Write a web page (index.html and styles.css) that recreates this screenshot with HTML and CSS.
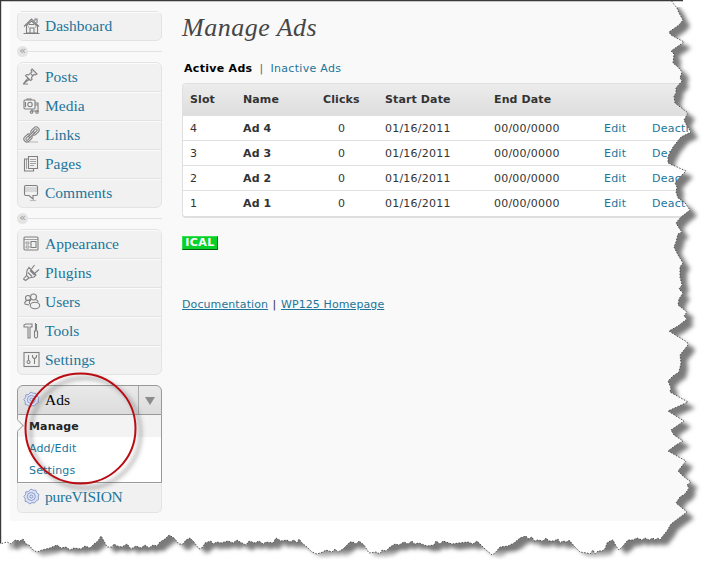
FILE: index.html
```html
<!DOCTYPE html>
<html lang="en">
<head>
<meta charset="utf-8">
<title>Manage Ads</title>
<link rel="stylesheet" href="styles.css">
</head>
<body>
<div class="page">
<div class="workspace">
  <nav class="sidebar">
    <ul class="menu">
      <li><svg class="icon" viewBox="0 0 18 18"><path d="M1 9.500 8.500 2l7.500 7.500M3.500 8v8h11V8M12 4V2h2v4M7 16v-5h4v5M6 7.500h5M0.500 16.500h16M5 10h1M12 10h1"/><path d="M3 9l5.500-5L14 9"/></svg><a>Dashboard</a></li>
    </ul>
    <div class="separator"><i>«</i></div>
    <ul class="menu">
      <li><svg class="icon" viewBox="0 0 18 18"><path d="M9 1l5 5-1.500 1-1.500-.5-2.500 3 .5 2-1.500 1L2.500 7.500 4 6.500l1.500.5L9 4 8 2.500zM5 10l-4.500 5.500L6 11.500M8 6l2 2M0 16h5"/></svg><a>Posts</a></li>
      <li><svg class="icon" viewBox="0 0 18 18"><rect x="1" y="3" width="11" height="9" rx="1"/><circle cx="7" cy="7.500" r="2.200"/><path d="M2.500 5v5M4 3V2h4v1M12 6h3v9M9 12v3M9 14h6M12 8h3"/><circle cx="8.500" cy="15" r="1.300"/><circle cx="14" cy="15" r="1.300"/></svg><a>Media</a></li>
      <li><svg class="icon" viewBox="0 0 18 18"><path class="faint" d="M5 16h10"/><g transform="rotate(-45 8.500 8.500)"><rect x="-1" y="5.500" width="9" height="6" rx="3"/><rect x="1" y="7.300" width="5" height="2.400" rx="1.200"/><rect x="9" y="5.500" width="9" height="6" rx="3"/><rect x="11" y="7.300" width="5" height="2.400" rx="1.200"/><path d="M5 7.700h7v1.800H5z" class="pale"/></g></svg><a>Links</a></li>
      <li><svg class="icon" viewBox="0 0 18 18"><path d="M5 4H1.500v12h9v-2"/><path class="pale" d="M5.500 1.500h9v12h-9z"/><path class="thin" d="M7 4.500h6M7 6.500h6M7 8.500h6M7 10.500h4M3.500 4v10"/></svg><a>Pages</a></li>
      <li><svg class="icon" viewBox="0 0 18 18"><rect class="shade" x="2" y="3" width="12" height="5"/><path d="M3 1.500h10q1.500 0 1.500 1.500v7q0 1.500-1.500 1.500h-3V15l-4-3.500H3Q1.500 11.500 1.500 10V3Q1.500 1.500 3 1.500z"/><path class="faint" d="M7 16.500h6"/></svg><a>Comments</a></li>
    </ul>
    <div class="separator"><i>«</i></div>
    <ul class="menu">
      <li><svg class="icon" viewBox="0 0 18 18"><rect x="1" y="2" width="14" height="13" rx="1"/><path class="thin" d="M1 4.500h14M3 7h3v2H3zM3 11h3v2H3z"/><path d="M8 6.500h5v6H8z"/></svg><a>Appearance</a></li>
      <li><svg class="icon" viewBox="0 0 18 18"><path d="M6 3.500 13 11l-2 2-5 1-2.500-2.500.5-5zM8.500 5l3-4M12 9l4-3.500M3.500 11.500.5 15l2 1.500L6 14M7 6.500l4.500 4.500M5 8.500l4 4"/></svg><a>Plugins</a></li>
      <li><svg class="icon" viewBox="0 0 18 18"><circle cx="5" cy="5" r="2.500"/><circle cx="10.500" cy="4" r="3"/><path d="M7 7C3 7 1 9 2 11l4 1M8 7c-2 1-2 3-1 4"/><ellipse class="pale" cx="12" cy="12.500" rx="4.700" ry="3.300"/><path d="M13 7c2 0 2 1 2 2"/></svg><a>Users</a></li>
      <li><svg class="icon" viewBox="0 0 18 18"><path d="M1 5V3l2-1h6v3H7v11H5V5H3zM12.500 1v8M11.500 9h3v6q-1.500 2-3 0zM13.500 2v6"/></svg><a>Tools</a></li>
      <li><svg class="icon" viewBox="0 0 18 18"><rect x="1" y="1.500" width="15" height="14"/><path d="M5.500 4v5M4 11a1.500 1.500 0 1 1 3 0 1.500 1.500 0 1 1-3 0M11.500 8v5M9.500 4v2l2 2 2-2V4"/></svg><a>Settings</a></li>
    </ul>
    <ul class="menu ads">
      <li class="current"><svg class="icon gear" viewBox="0 0 18 18"><path d="M8 1l2.200 1.300 2.600-.1.800 2.500L16 6.500l-.8 2.500.3 2.600-2.300 1.200L11.500 15 9 14.600 6.500 16l-1.900-2-2.500-.6.200-2.600L.8 8.500l1.700-2 .3-2.600 2.600-.4z"/><circle cx="8.300" cy="8.500" r="4"/><circle cx="8.300" cy="8.500" r="1.500"/></svg><a>Ads</a><span class="toggle"></span></li>
      <li class="submenu"><a class="selected">Manage</a><a>Add/Edit</a><a>Settings</a></li>
      <li><svg class="icon gear" viewBox="0 0 18 18"><path d="M8 1l2.200 1.300 2.600-.1.800 2.500L16 6.500l-.8 2.500.3 2.600-2.300 1.200L11.500 15 9 14.600 6.500 16l-1.900-2-2.500-.6.200-2.600L.8 8.500l1.700-2 .3-2.600 2.600-.4z"/><circle cx="8.300" cy="8.500" r="4"/><circle cx="8.300" cy="8.500" r="1.500"/></svg><a class="vision">pureVISION</a></li>
    </ul>
  </nav>
  <main>
    <h1>Manage Ads</h1>
    <div class="tabs"><b>Active Ads</b><span>|</span><a>Inactive Ads</a></div>
    <div class="ads-table">
      <div class="row head"><span>Slot</span><span>Name</span><span>Clicks</span><span>Start Date</span><span>End Date</span></div>
      <div class="row"><span>4</span><b>Ad 4</b><span class="clicks">0</span><span>01/16/2011</span><span>00/00/0000</span><a>Edit</a><a>Deacti</a></div>
      <div class="row"><span>3</span><b>Ad 3</b><span class="clicks">0</span><span>01/16/2011</span><span>00/00/0000</span><a>Edit</a><a>Deact</a></div>
      <div class="row"><span>2</span><b>Ad 2</b><span class="clicks">0</span><span>01/16/2011</span><span>00/00/0000</span><a>Edit</a><a>Deact</a></div>
      <div class="row"><span>1</span><b>Ad 1</b><span class="clicks">0</span><span>01/16/2011</span><span>00/00/0000</span><a>Edit</a><a>Deact</a></div>
    </div>
    <div class="ical">ICAL</div>
    <div class="links"><a>Documentation</a><span>|</span><a>WP125 Homepage</a></div>
  </main>
</div>
<svg class="overlay" width="704" height="565" viewBox="0 0 704 565">
  <defs>
    <path id="sheet" d="M0 0H671L673 3 677 8 679 13 683 20 679 25 669 32 671 35 684 42 671 51 674 54 673 63 678 67 682 72 680 78 682 81 676 88 676 93 674 96 675 103 688 113 684 120 687 126 691 132 681 137 673 147 668 157 668 163 686 171 680 177 675 183 677 187 676 192 678 198 685 203 690 210 681 217 676 223 679 228 682 232 678 234 676 242 674 247 678 255 683 263 680 267 680 277 682 285 679 289 683 293 679 299 678 305 687 312 684 316 687 319 678 326 669 331 677 336 687 342 688 345 680 355 681 363 679 372 673 376 668 381 671 388 670 392 688 402 668 411 684 421 671 430 674 435 683 441 676 445 668 451 686 461 678 471 683 476 691 482 687 485 689 488 685 494 680 497 676 503 687 512 671 524 667 531 662 537 660 540 658 538 655 540 653 538 649 540 645 538 642 540 637 538 633 540 628 540 623 546 619 550 616 546 613 540 610 541 607 543 605 549 602 551 598 551 595 554 593 550 590 554 587 553 580 552 575 547 569 540 567 542 563 541 560 543 558 539 554 541 549 541 546 538 543 541 538 540 534 541 532 537 528 539 526 536 520 538 514 543 508 546 500 547 495 553 492 555 485 549 477 541 473 544 468 542 459 543 452 544 443 541 440 544 436 541 434 545 427 546 419 543 414 544 412 541 408 544 404 542 399 545 395 544 390 547 386 551 382 550 380 554 376 552 369 553 364 545 359 541 356 544 353 542 350 542 346 546 343 549 338 552 335 549 332 552 326 550 323 552 317 554 312 552 307 547 302 543 299 539 297 543 294 540 290 542 287 540 281 541 276 538 273 543 266 542 263 544 259 541 255 543 249 541 246 545 240 542 237 540 233 543 228 541 221 543 217 542 213 544 211 541 205 543 203 547 199 549 194 542 190 538 186 540 183 544 179 544 174 538 169 535 165 539 160 542 157 546 153 545 149 548 145 545 141 548 136 546 131 549 127 544 122 547 117 546 114 544 112 547 107 547 104 541 101 536 98 541 94 544 90 548 85 546 81 549 74 548 70 550 66 547 61 548 57 545 50 548 42 550 37 552 33 550 29 545 26 544 23 539 20 541 15 540 11 544 7 542 0 544Z"/>
    <filter id="soft" x="-20%" y="-20%" width="140%" height="140%"><feGaussianBlur stdDeviation="2"/></filter>
    <mask id="cutout"><rect width="704" height="565" fill="#fff"/><use href="#sheet" fill="#000"/></mask>
    <linearGradient id="fade" gradientUnits="userSpaceOnUse" x1="0" y1="549" x2="0" y2="560"><stop offset="0" stop-color="#fff"/><stop offset="1" stop-color="#000"/></linearGradient>
    <linearGradient id="start" gradientUnits="userSpaceOnUse" x1="6" y1="0" x2="16" y2="0"><stop offset="0" stop-color="#fff"/><stop offset="1" stop-color="#fff" stop-opacity="0"/></linearGradient>
    <mask id="shade"><rect width="704" height="565" fill="url(#fade)"/></mask>
  </defs>
  <g mask="url(#cutout)">
    <rect width="704" height="565" fill="#fff"/>
    <g mask="url(#shade)"><use href="#sheet" transform="translate(7 6)" fill="#7a7a7a" filter="url(#soft)"/></g>
    <path d="M0 530H18V565H0Z" fill="url(#start)"/>
    <path d="M672 0H704V7H672Z" fill="#fff"/>
  </g>
  <use href="#sheet" fill="none" stroke="#444" stroke-width=".9" stroke-dasharray="1.500 1.500"/>
  <path d="M0 .5H683M.5 0V543" stroke="#3b383b" stroke-width="1.400"/>
  <circle cx="85.500" cy="433" r="55" fill="none" stroke="#555" stroke-opacity=".45" stroke-width="3" filter="url(#soft)"/>
  <circle cx="80.500" cy="428.500" r="55" fill="none" stroke="#b90c13" stroke-width="2"/>
</svg>
</div>
</body>
</html>
```
FILE: styles.css
```css
* { box-sizing: border-box; }
body { margin: 0; background: #fff; font: 11px/14px "DejaVu Sans", sans-serif; color: #333; }
.page { position: relative; width: 704px; height: 565px; overflow: hidden; }
.workspace { display: flex; margin-left: 10px; height: 521px; background: #f9f9f9; overflow: hidden; }
a { color: #21759b; }
.sidebar { width: 145px; margin: 11px 0 0 7px; flex: none; }
.menu { list-style: none; margin: 0; padding: 0; border: 1px solid #e3e3e3; border-radius: 6px; background: #f1f1f1; }
.menu li { display: flex; align-items: center; height: 29px; padding-left: 5px; border-top: 1px solid #fbfbfb; border-bottom: 1px solid #e2e2e2; font: 15.5px/22px "Liberation Serif", serif; }
.menu li:first-child { border-radius: 5px 5px 0 0; }
.menu li:last-child { border-bottom: 0; border-radius: 0 0 5px 5px; height: 28px; }
.menu li > a { margin: -1px 0 0 4px; }
.menu .vision { letter-spacing: -.25px; }
.icon { width: 18px; height: 18px; margin-top: -1px; fill: none; stroke: #808080; stroke-width: 1.1; flex: none; }
.icon .pale { fill: #f1f1f1; }
.icon .thin { stroke-width: .7; }
.icon .faint { stroke: #bbb; }
.icon .shade { fill: #d8d8d8; stroke: none; }
.gear { stroke: #8294c4; fill: #dce3f5; stroke-width: .9; }
.separator { display: flex; align-items: center; height: 21px; }
.separator i { width: 11px; height: 11px; border-radius: 50%; background: #e4e4e4; color: #999; font: 11px/9px "DejaVu Sans", sans-serif; text-align: center; }
.separator::after { content: ""; flex: 1; height: 1px; background: #e2e2e2; }
.menu:has(+ .separator) { min-height: 30px; }
.menu.ads { margin-top: 10px; border: 0; background: none; }
.menu.ads li.current { height: 30px; border: 1px solid #999; border-radius: 6px 6px 0 0; background: linear-gradient(#e9e9e9, #dcdcdc); }
.menu li.current a { color: #000; margin-top: 0; }
.toggle { display: flex; align-items: center; justify-content: center; width: 23px; height: 100%; padding-top: 2px; margin-left: auto; border-left: 1px solid #aaa; }
.toggle::after { content: ""; border: 5px solid transparent; border-top: 8px solid #8c8c8c; border-bottom: 0; }
.menu.ads li.submenu { display: block; height: 68px; padding: 0; border: 1px solid #999; border-top: 0; background: #fff; font: 11px/22px "DejaVu Sans", sans-serif; letter-spacing: .15px; }
.menu li.submenu > a { display: block; height: 22px; margin: 0; padding: 1px 0 0 11px; line-height: 22px; }
.submenu .selected { position: relative; background: #f3f3f3; color: #222; font-weight: bold; }
.submenu .selected::before { content: ""; position: absolute; left: -5px; top: 6px; width: 8px; height: 8px; border: 1px solid #aaa; border-left: 0; border-bottom: 0; background: #f9f9f9; transform: rotate(45deg); }
.menu.ads li:last-child { height: 30px; padding-bottom: 2px; border: 1px solid #e3e3e3; border-top-color: #f7f7f7; background: #f1f1f1; }
main { flex: none; width: 540px; margin-left: 20px; }
h1 { margin: 10px 0 0; font: italic 26px/36px "Liberation Serif", serif; color: #464646; letter-spacing: .5px; }
.tabs { display: flex; margin: 16px 0 0 2px; line-height: 14px; letter-spacing: .3px; }
.tabs b { color: #000; }
.tabs span { margin: 0 7px; color: #666; }
.ads-table { margin-top: 7px; border: 1px solid #dfdfdf; border-bottom-width: 2px; border-radius: 4px; background: #fff; overflow: hidden; letter-spacing: .22px; }
.row { display: grid; grid-template-columns: 53px 80px 62px 109px 110px 48px 70px; align-items: center; height: 25px; padding: 1px 0 0 7px; border-bottom: 1px solid #dfdfdf; }
.row:last-child { border-bottom: 0; }
.row.head { height: 32px; padding-top: 0; background: linear-gradient(#ececec, #dedede); font-weight: bold; }
.row.head, .row b { letter-spacing: .12px; }
.clicks { padding-left: 15px; }
.ical { width: 36px; height: 14px; margin-top: 18px; background: #0ad02c; border: 1px solid #35df50; border-right-color: #067d18; border-bottom-color: #045d10; color: #fff; font: bold 11px/12px "DejaVu Sans", sans-serif; letter-spacing: .4px; text-align: center; }
.links { display: flex; margin-top: 48px; letter-spacing: .1px; }
.links a { text-decoration: underline; }
.links span { margin: 0 4.500px; }
.overlay { position: absolute; left: 0; top: 0; pointer-events: none; }
```
